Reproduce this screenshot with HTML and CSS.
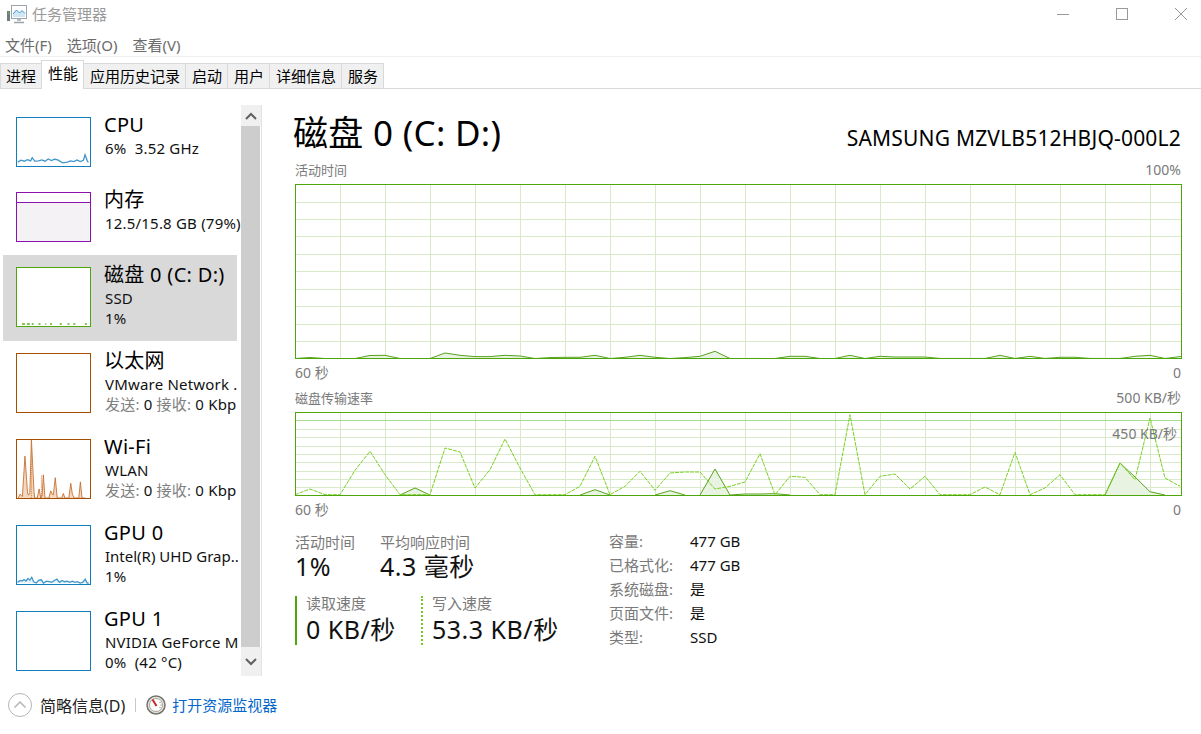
FILE: index.html
```html
<!DOCTYPE html>
<html lang="zh-CN">
<head>
<meta charset="utf-8">
<title>任务管理器</title>
<link rel="stylesheet" href="styles.css">
</head>
<body>
<div class="window">
  <header class="titlebar">
    <svg class="app-icon" width="20" height="20" viewBox="0 0 20 20"><path d="M0 6h3v10H0z" fill="#6f7c78"/><path d="M1 7h1v2H1z" fill="#54c24a"/><rect x="4.500" y="0.500" width="15" height="13" fill="#fff" stroke="#9aa4aa"/><path d="M6 9l3.500-4 3 3 2.500-2.500 3 3V12H6z" fill="#cfe6f5"/><path d="M6 9l3.500-4 3 3 2.500-2.500 3 3" fill="none" stroke="#3c97c8"/><path d="M10 14h4v2h-4z" fill="#b6bcc1"/><path d="M7 17.500h10" stroke="#9aa2a8" stroke-width="1.500"/></svg>
    <span class="app-title">任务管理器</span>
    <div class="win-controls">
      <svg width="14" height="14" viewBox="0 0 14 14"><path d="M1 7.500h12" stroke="#999"/></svg>
      <svg width="14" height="14" viewBox="0 0 14 14"><rect x="1.500" y="1.500" width="11" height="11" fill="none" stroke="#999"/></svg>
      <svg width="14" height="14" viewBox="0 0 14 14"><path d="M1 1l12 12M13 1L1 13" stroke="#999"/></svg>
    </div>
  </header>
  <nav class="menubar"><span>文件(F)</span><span>选项(O)</span><span>查看(V)</span></nav>
  <nav class="tabs">
    <span class="tab">进程</span><span class="tab active">性能</span><span class="tab">应用历史记录</span><span class="tab">启动</span><span class="tab">用户</span><span class="tab">详细信息</span><span class="tab">服务</span>
  </nav>

  <main class="main">
    <aside class="sidebar">
      <div class="list">
        <div class="item short">
          <div class="thumb cpu"><svg viewBox="49 52 225 150"><path d="M50 190l10-6 10 3 10-5 10 4 5-10 8 11 12-1 10-3 10 4 10-7 10 5 10-4 10 2 15 9 15-2 10-4 10 2 10-5 10 5 10-4 5-17 8 21 3 2" fill="none" stroke="#3f96cc" stroke-width="4"/></svg></div>
          <div class="info"><div class="name">CPU</div><div class="sub">6%&nbsp; 3.52 GHz</div></div>
        </div>
        <div class="item short">
          <div class="thumb mem"><div class="mem-free"></div><div class="mem-used"></div></div>
          <div class="info"><div class="name">内存</div><div class="sub">12.5/15.8 GB (79%)</div></div>
        </div>
        <div class="item selected">
          <div class="thumb disk"><svg viewBox="0 0 75 60"><path d="M5 58h3M10 58h3M15 58h2M22 58h2M29 58h1M34 58h2M44 58h2M52 58h2M58 58h2M70 58h2" stroke="#5fb01f" stroke-width="1.500"/></svg></div>
          <div class="info"><div class="name">磁盘 0 (C: D:)</div><div class="sub">SSD</div><div class="sub">1%</div></div>
        </div>
        <div class="item">
          <div class="thumb net"></div>
          <div class="info"><div class="name">以太网</div><div class="sub">VMware Network .</div><div class="sub"><span class="dim">发送:</span> 0 <span class="dim">接收:</span> 0 Kbp</div></div>
        </div>
        <div class="item">
          <div class="thumb net"><svg viewBox="49 298 225 180"><path d="M52 478l6-12 3 4 4 3 8-125 8 115 3 6 4-8 5-163 8 160 2 20 8 0 6-28 5 28 4-6 4-66 5 72h12l6-22 4 10 4 2 6-53 6 63h14l5-14 5 14h12l6-46 5 34 6 12h14l5-50 5 50h10" fill="#f3d8c2" stroke="#c2651f" stroke-width="2.500"/><path d="M124 478V408" stroke="#d66a28" stroke-width="3" stroke-dasharray="3 3"/><path d="M93 478V300" stroke="#d6843f" stroke-width="3" stroke-dasharray="3 3"/></svg></div>
          <div class="info"><div class="name">Wi-Fi</div><div class="sub">WLAN</div><div class="sub"><span class="dim">发送:</span> 0 <span class="dim">接收:</span> 0 Kbp</div></div>
        </div>
        <div class="item">
          <div class="thumb cpu"><svg viewBox="19 17 225 180"><path d="M20 192l8-6 6 2 6-5 6 5 6-8 6 5 6-9 6 14 8 4 8-9 8-1 6 10 10-6 8 2 8 2 8-6 8-4 8 10 8-6 8 4 8-2 8 4 8-4 8 4 8-2 8 4 8-2 8-10 6 12h5" fill="#e3f0f8" stroke="#3f96cc" stroke-width="4"/></svg></div>
          <div class="info"><div class="name">GPU 0</div><div class="sub tight">Intel(R) UHD Grap..</div><div class="sub">1%</div></div>
        </div>
        <div class="item">
          <div class="thumb cpu"></div>
          <div class="info"><div class="name">GPU 1</div><div class="sub">NVIDIA GeForce M</div><div class="sub">0%&nbsp; (42 °C)</div></div>
        </div>
      </div>
      <div class="scrollbar">
        <div class="sb-btn up"><svg width="12" height="8" viewBox="0 0 12 8"><path d="M1 7l5-5 5 5" fill="none" stroke="#606060" stroke-width="2"/></svg></div>
        <div class="sb-thumb"></div>
        <div class="sb-btn down"><svg width="12" height="8" viewBox="0 0 12 8"><path d="M1 1l5 5 5-5" fill="none" stroke="#606060" stroke-width="2"/></svg></div>
      </div>
    </aside>

    <section class="detail">
      <div class="heading"><h1>磁盘 0 (C: D:)</h1><div class="model">SAMSUNG MZVLB512HBJQ-000L2</div></div>

      <div class="graph-caption"><span>活动时间</span><span class="scale">100%</span></div>
      <div class="graph tall">
        <svg width="885" height="173" viewBox="1 1 885 173">
          <path class="grid" d="M45.500 0V175M90.500 0V175M135.500 0V175M180.500 0V175M225.500 0V175M270.500 0V175M315.500 0V175M360.500 0V175M405.500 0V175M450.500 0V175M495.500 0V175M540.500 0V175M585.500 0V175M630.500 0V175M675.500 0V175M720.500 0V175M765.500 0V175M810.500 0V175M855.500 0V175M0 18.500H887M0 35.500H887M0 52.500H887M0 70.500H887M0 87.500H887M0 105.500H887M0 122.500H887M0 140.500H887M0 157.500H887"/>
          <path class="read" d="M0 174.500L15 173.500L30 174.500L60 174.500L75 171.500L90 171.300L105 174.500L135 174.500L150 169L165 171.300L180 172.600L195 172.600L210 171.300L225 172L240 174.500L255 173.600L270 173.300L285 173.300L300 171.300L315 174.500L330 173.300L345 171.300L360 173.300L375 174.500L390 173.600L405 172.300L420 167.300L435 174.500L480 174.500L495 172.300L510 172.300L525 174.500L540 174.500L555 171.300L570 174.500L585 172.300L600 173L615 173L630 173L645 174.500L690 174.500L705 171.300L720 174.500L735 172.300L750 174.500L765 173.300L780 173.300L795 174.500L825 174.500L840 172.300L855 171.300L870 174.500L885 172.600L900 173.300"/>
        </svg>
      </div>
      <div class="graph-foot"><span>60 秒</span><span>0</span></div>

      <div class="graph-caption second"><span>磁盘传输速率</span><span class="scale">500 KB/秒</span></div>
      <div class="graph short-graph">
        <svg width="885" height="82" viewBox="1 1 885 82">
          <path class="grid" d="M45.500 0V84M90.500 0V84M135.500 0V84M180.500 0V84M225.500 0V84M270.500 0V84M315.500 0V84M360.500 0V84M405.500 0V84M450.500 0V84M495.500 0V84M540.500 0V84M585.500 0V84M630.500 0V84M675.500 0V84M720.500 0V84M765.500 0V84M810.500 0V84M855.500 0V84M0 17.500H887M0 25.500H887M0 34.500H887M0 42.500H887M0 50.500H887M0 59.500H887M0 67.500H887M0 75.500H887"/>
          <path class="limit" d="M0 8.500H887"/>
          <path class="read" d="M105 83L120 76L135 83M285 83L300 77.700L315 83M360 83L375 78.700L390 83M405 83L420 57L435 83L450 82L465 82L480 81.700L495 83M810 83L825 51L840 65L855 79.700L870 83"/>
          <polyline class="write" points="0,82.700 15,77 30,82.700 45,82.700 60,58.300 75,39.300 90,62.700 105,82.700 120,82.700 135,82.700 150,36 165,40 180,76 195,57.700 210,27 225,56 240,82.700 255,82.700 270,82.700 285,74.300 300,44.300 315,82.700 330,74.300 345,59.300 360,78.300 375,61 390,60 405,60 420,77 435,74.300 450,70 465,41.700 480,82.700 495,64.300 510,65.300 525,82.700 540,82.700 555,2.700 570,82.700 585,64.300 600,62 615,77 630,64.300 645,82.700 660,82.700 675,82.700 690,75 705,82.700 720,40.300 735,82.700 750,76 765,62.700 780,82.700 795,82.700 810,82.700 825,51 840,67.700 855,6 870,66 885,74.300"/>
        </svg>
        <span class="limit-label">450 KB/秒</span>
      </div>
      <div class="graph-foot"><span>60 秒</span><span>0</span></div>

      <div class="stats">
        <div class="stats-left">
          <div class="stat-row top">
            <div class="stat w-a"><div class="label">活动时间</div><div class="value">1%</div></div>
            <div class="stat"><div class="label">平均响应时间</div><div class="value">4.3 毫秒</div></div>
          </div>
          <div class="stat-row">
            <div class="stat speed read-bar"><div class="label">读取速度</div><div class="value">0 KB/秒</div></div>
            <div class="stat speed write-bar"><div class="label">写入速度</div><div class="value">53.3 KB/秒</div></div>
          </div>
        </div>
        <dl class="props">
          <dt>容量:</dt><dd>477 GB</dd>
          <dt>已格式化:</dt><dd>477 GB</dd>
          <dt>系统磁盘:</dt><dd>是</dd>
          <dt>页面文件:</dt><dd>是</dd>
          <dt>类型:</dt><dd>SSD</dd>
        </dl>
      </div>
    </section>
  </main>

  <footer class="footer">
    <svg width="24" height="24" viewBox="0 0 24 24"><circle cx="12" cy="12" r="11.500" fill="#fff" stroke="#b5b5b5"/><path d="M6.500 14.500L12 9l5.500 5.500" fill="none" stroke="#b5b5b5" stroke-width="1.500"/></svg>
    <span class="fewer">简略信息(D)</span>
    <span class="sep"></span>
    <svg width="20" height="20" viewBox="0 0 20 20"><circle cx="10" cy="10" r="9" fill="#e4e4e2" stroke="#77736d" stroke-width="1.500"/><circle cx="10" cy="10" r="6.500" fill="#fdfdfb" stroke="#a9a59e"/><path d="M6.500 4.500L10.500 11" stroke="#c8242a" stroke-width="2"/><path d="M14 7v1M15.500 10h-1M14 13v-1" stroke="#888"/></svg>
    <a class="link">打开资源监视器</a>
  </footer>
</div>
</body>
</html>
```
FILE: styles.css
```css
* { box-sizing: border-box; }
html, body { margin: 0; height: 100%; background: #fff; }
body { font-family: "Noto Sans", "Noto Sans CJK SC", sans-serif; color: #000; overflow: hidden; }
.window { width: 1201px; height: 734px; display: flex; flex-direction: column; }

.titlebar { height: 26px; display: flex; align-items: center; padding-left: 7px; }
.app-icon { margin-top: 3px; }
.app-title { margin-left: 5px; font-size: 15px; color: #9a9a9a; }
.win-controls { margin-left: auto; margin-top: 2px; display: flex; gap: 45px; padding-right: 13px; }

.menubar { height: 31px; display: flex; gap: 15px; padding: 7px 0 0 5px; align-items: center; font-size: 15px; color: #6b6b6b; border-bottom: 1px solid #f0f0f0; }

.tabs { height: 32px; display: flex; align-items: flex-end; border-bottom: 1px solid #d9d9d9; }
.tab { height: 25px; padding: 0 5px 0 6px; font-size: 15px; line-height: 24px; background: #f0f0f0; border-top: 1px solid #d9d9d9; border-right: 1px solid #d9d9d9; color: #000; }
.tab:first-child { box-shadow: inset 1px 0 #d9d9d9; }
.tab.active { height: 29px; margin-bottom: -1px; background: #fff; position: relative; z-index: 1; box-shadow: -1px 0 #d9d9d9; }

.main { flex: 1; display: flex; padding-top: 16px; min-height: 0; }

.sidebar { width: 295px; padding-left: 3px; display: flex; align-items: flex-start; }
.list { width: 238px; height: 570px; overflow: hidden; }
.item { height: 86px; width: 234px; display: flex; padding: 12px 0 0 13px; white-space: nowrap; }
.item.short { height: 75px; }
.item.selected { background: #d9d9d9; }
.thumb { width: 75px; height: 60px; border: 1px solid; flex: none; background: #fff; overflow: hidden; }
.item.short .thumb { height: 50px; }
.thumb svg { display: block; width: 100%; height: 100%; }
.thumb.cpu { border-color: #117dbb; }
.thumb.mem { border-color: #8b12ae; display: flex; flex-direction: column; }
.mem-free { height: 10px; border-bottom: 1px solid #8b12ae; }
.mem-used { flex: 1; background: #f4f2f4; }
.thumb.disk { border-color: #4da60c; }
.thumb.net { border-color: #a74f01; }
.info { margin-left: 14px; margin-top: -5px; }
.name { font-size: 20px; line-height: 26px; letter-spacing: 0.3px; margin-left: -1px; }
.sub { font-size: 15px; line-height: 20px; color: #111; letter-spacing: 0.2px; }
.sub.tight { letter-spacing: 0; }
.dim { color: #808080; }

.scrollbar { width: 21px; height: 571px; display: flex; flex-direction: column; background: #fff; border-right: 1px solid #e3e3e3; }
.sb-btn { display: flex; align-items: center; justify-content: center; background: #f0f0f0; flex: none; }
.sb-btn.up { height: 21px; }
.sb-btn.down { height: 29px; }
.sb-thumb { flex: 1; background: #cdcdcd; margin-right: 1px; }

.detail { width: 906px; padding-right: 20px; }
.heading { display: flex; justify-content: space-between; align-items: baseline; height: 56px; padding-top: 4px; margin-left: -2px; }
h1 { margin: 0; font-size: 35px; line-height: 48px; font-weight: 400; letter-spacing: 0.3px; }
.model { font-size: 21px; letter-spacing: 0.2px; }

.graph-caption, .graph-foot { display: flex; justify-content: space-between; font-size: 13px; color: #7a7a7a; line-height: 18px; }
.graph-caption { height: 23px; }
.graph-caption .scale { font-size: 14px; }
.graph-caption.second { margin-top: 4px; }
.graph-foot { font-size: 14px; margin-top: 2px; height: 24px; line-height: 24px; }
.graph { width: 887px; border: 1px solid #4da60c; position: relative; background: #fff; }
.graph svg { display: block; }
.graph.tall { height: 175px; }
.graph.short-graph { height: 84px; }
.grid { stroke: #d9eaca; fill: none; }
.limit { stroke: #a8dc90; fill: none; }
.read { stroke: #55a31c; fill: #e9f3e1; }
.write { stroke: #78d020; fill: none; stroke-dasharray: 4 1; }
.limit-label { position: absolute; right: 4px; top: 12px; font-size: 14px; line-height: 18px; color: #7a7a7a; }

.stats { display: flex; margin-top: 10px; }
.stats-left { width: 314px; }
.stat-row { display: flex; }
.stat-row.top { height: 64px; }
.stat.w-a { width: 85px; }
.label { font-size: 15px; line-height: 20px; color: #7a7a7a; }
.value { font-size: 25px; line-height: 28px; color: #111; letter-spacing: 0.5px; }
.stat.speed { height: 49px; padding-left: 9px; }
.speed .label { margin-top: -3px; }
.speed .value { line-height: 32px; }
.read-bar { width: 126px; border-left: 2px solid #4da60c; }
.write-bar { border-left: 2px dotted #76cc1e; }
.props { margin: -3px 0 0; display: grid; grid-template-columns: 81px auto; grid-auto-rows: 24px; font-size: 15px; line-height: 24px; }
.props dt { color: #7a7a7a; }
.props dd { margin: 0; color: #111; }

.footer { height: 59px; display: flex; align-items: center; padding-left: 8px; }
.fewer { margin-left: 8px; font-size: 16px; color: #222; }
.sep { width: 1px; height: 14px; background: #c8c8c8; margin: 0 10px; }
.link { margin-left: 6px; font-size: 15px; color: #0066cc; }
```
